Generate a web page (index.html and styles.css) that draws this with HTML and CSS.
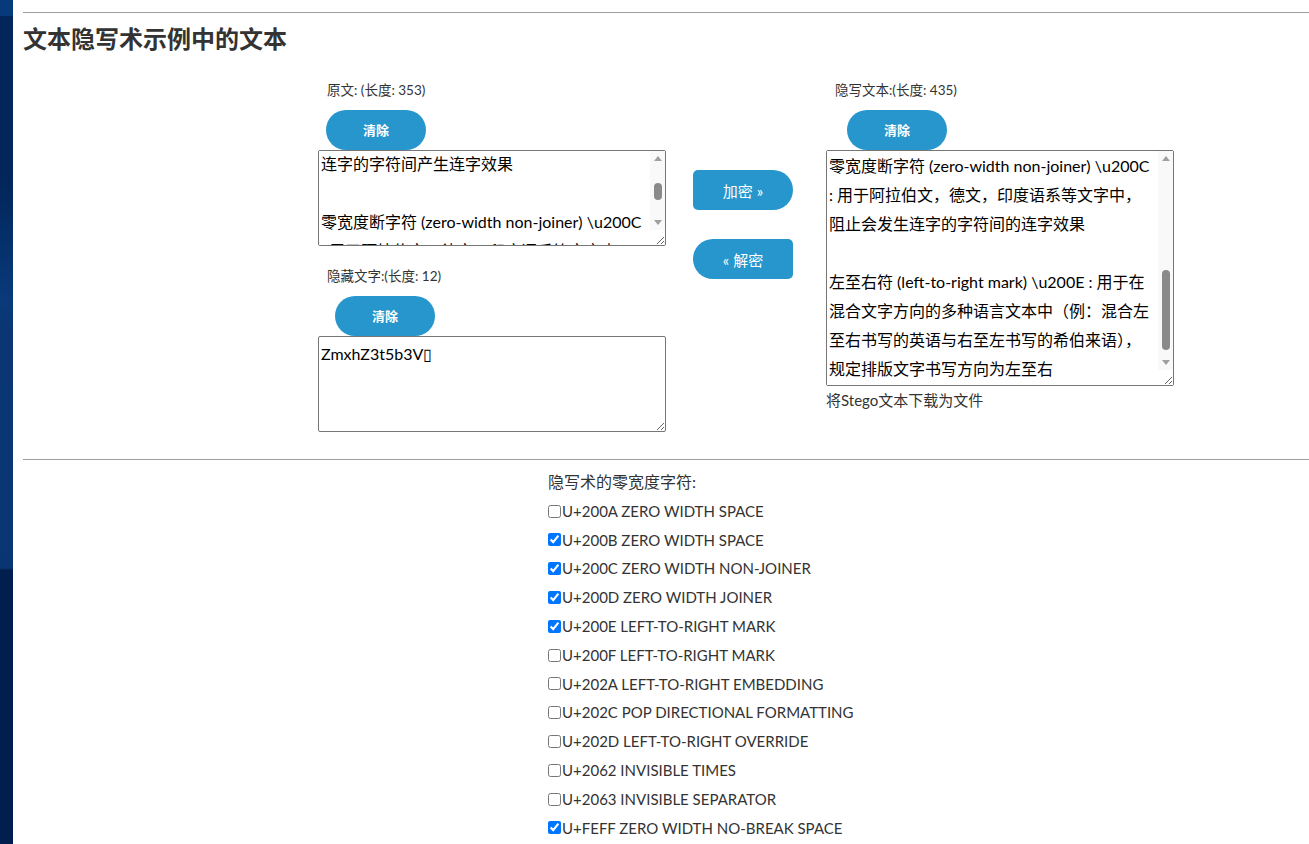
FILE: index.html
```html
<!DOCTYPE html>
<html lang="zh-CN">
<head>
<meta charset="utf-8">
<title>文本隐写术示例中的文本</title>
<link rel="stylesheet" href="styles.css">
</head>
<body>
<div class="page">
  <aside class="strip"></aside>
  <main class="main">
    <hr class="rule rule-top">
    <h2 class="title">文本隐写术示例中的文本</h2>
    <section class="stego">
      <div class="col col-left">
        <div class="label">原文: (长度: 353)</div>
        <button class="btn-clear ind-8">清除</button>
        <div class="ta-wrap">
          <textarea class="ta ta-small ta-scroll" id="plain" spellcheck="false">零宽度字符是一些不可见的，不可打印的字符。它们存在于页面中主要用于调整字符的显示格式，下面就是一些常见的零宽度字符及它们的unicode码和原本用途：

零宽度空格符 (zero-width space) \u200B : 用于较长单词的换行分隔

零宽度非断空格符 (zero width no-break space) \uFEFF : 用于阻止特定位置的换行分隔

零宽度连字符 (zero-width joiner) \u200D : 用于阿拉伯文与印度语系等文字中，使不会发生连字的字符间产生连字效果

零宽度断字符 (zero-width non-joiner) \u200C : 用于阿拉伯文，德文，印度语系等文字中，阻止会发生连字的字符间的连字效果

左至右符 (left-to-right mark) \u200E : 用于在混合文字方向的多种语言文本中（例：混合左至右书写的英语与右至左书写的希伯来语），规定排版文字书写方向为左至右

右至左符 (right-to-left mark) \u200F : 用于在混合文字方向的多种语言文本中，规定排版文字书写方向为右至左</textarea>
          <div class="vbar"><span class="arr arr-up"></span><span class="track"><span class="thumb" style="top: 17px; height: 17px;"></span></span><span class="arr arr-down"></span></div>
        </div>
        <div class="label label-gap">隐藏文字:(长度: 12)</div>
        <button class="btn-clear ind-17">清除</button>
        <textarea class="ta ta-small" spellcheck="false">ZmxhZ3t5b3V▯</textarea>
      </div>
      <div class="col col-mid">
        <button class="btn-act btn-enc">加密 »</button>
        <button class="btn-act btn-dec">« 解密</button>
      </div>
      <div class="col col-right">
        <div class="label">隐写文本:(长度: 435)</div>
        <button class="btn-clear ind-21">清除</button>
        <div class="ta-wrap">
          <textarea class="ta ta-big ta-scroll" id="stego" spellcheck="false">零宽度字符是一些不可见的，不可打印的字符。它们存在于页面中主要用于调整字符的显示格式，下面就是一些常见的零宽度字符及它们的unicode码和原本用途：

零宽度空格符 (zero-width space) \u200B : 用于较长单词的换行分隔

零宽度非断空格符 (zero width no-break space) \uFEFF : 用于阻止特定位置的换行分隔

零宽度连字符 (zero-width joiner) \u200D : 用于阿拉伯文与印度语系等文字中，使不会发生连字的字符间产生连字效果

零宽度断字符 (zero-width non-joiner) \u200C : 用于阿拉伯文，德文，印度语系等文字中，阻止会发生连字的字符间的连字效果

左至右符 (left-to-right mark) \u200E : 用于在混合文字方向的多种语言文本中（例：混合左至右书写的英语与右至左书写的希伯来语），规定排版文字书写方向为左至右

右至左符 (right-to-left mark) \u200F : 用于在混合文字方向的多种语言文本中，规定排版文字书写方向为右至左</textarea>
          <div class="vbar"><span class="arr arr-up"></span><span class="track"><span class="thumb" style="top: 104px; height: 80px;"></span></span><span class="arr arr-down"></span></div>
        </div>
        <div class="download">将Stego文本下载为文件</div>
      </div>
    </section>
    <hr class="rule rule-mid">
    <section class="chars">
      <div class="chars-title">隐写术的零宽度字符:</div>
      <label class="chk"><input type="checkbox">U+200A ZERO WIDTH SPACE</label>
      <label class="chk"><input type="checkbox" checked>U+200B ZERO WIDTH SPACE</label>
      <label class="chk"><input type="checkbox" checked>U+200C ZERO WIDTH NON-JOINER</label>
      <label class="chk"><input type="checkbox" checked>U+200D ZERO WIDTH JOINER</label>
      <label class="chk"><input type="checkbox" checked>U+200E LEFT-TO-RIGHT MARK</label>
      <label class="chk"><input type="checkbox">U+200F LEFT-TO-RIGHT MARK</label>
      <label class="chk"><input type="checkbox">U+202A LEFT-TO-RIGHT EMBEDDING</label>
      <label class="chk"><input type="checkbox">U+202C POP DIRECTIONAL FORMATTING</label>
      <label class="chk"><input type="checkbox">U+202D LEFT-TO-RIGHT OVERRIDE</label>
      <label class="chk"><input type="checkbox">U+2062 INVISIBLE TIMES</label>
      <label class="chk"><input type="checkbox">U+2063 INVISIBLE SEPARATOR</label>
      <label class="chk"><input type="checkbox" checked>U+FEFF ZERO WIDTH NO-BREAK SPACE</label>
    </section>
  </main>
</div>
<script src="script.js"></script>
</body>
</html>
```
FILE: styles.css
```css
html, body {
  margin: 0;
  padding: 0;
  background: #fff;
}
body {
  font-family: "Lato", "Noto Sans CJK SC", sans-serif;
  color: #333;
  overflow: hidden;
}
.page {
  display: flex;
  min-height: 844px;
}
.strip {
  width: 13px;
  flex: none;
  background: linear-gradient(to bottom,
    #073a7b 0px, #073a7b 16px,
    #022659 16px, #022659 180px,
    #04306a 240px, #0a3a7a 300px,
    #0b3673 330px, #0a3573 568px,
    #001f4e 570px, #001f4e 844px);
}
.main {
  flex: 1;
  padding-left: 10px;
  min-width: 0;
}
.rule {
  border: 0;
  border-top: 1px solid #9d9d9d;
  height: 0;
  margin: 0;
}
.rule-top { margin-top: 12px; }
.rule-mid { margin-top: 27px; }
.title {
  margin: 10px 0 0;
  font-size: 24px;
  line-height: 32px;
  font-weight: bold;
  color: #333;
}
.stego {
  display: flex;
  align-items: flex-start;
  margin: 20px 0 0 295px;
}
.col { display: flex; flex-direction: column; align-items: flex-start; }
.col-left, .col-right { width: 348px; }
.col-mid { width: 100px; margin: 0 33px 0 27px; padding-top: 95px; gap: 29px; }
.label {
  font-size: 13.5px;
  line-height: 20px;
  padding: 5px 0 0 9px;
  color: #333;
}
.label-gap { padding-top: 20px; }
.btn-clear {
  margin-top: 10px;
  width: 100px;
  height: 40px;
  border: 0;
  border-radius: 20px;
  background: #2696cd;
  color: #fff;
  font-family: inherit;
  font-size: 13px;
  font-weight: bold;
  padding: 0 0 2px;
}
.ind-8 { margin-left: 8px; }
.ind-17 { margin-left: 17px; }
.ind-21 { margin-left: 21px; }
.ta-wrap {
  position: relative;
  width: 348px;
}
.ta {
  display: block;
  box-sizing: border-box;
  width: 348px;
  margin: 0;
  padding: 2px;
  border: 1px solid #767676;
  border-radius: 2px;
  font-family: "Lato", "Noto Sans CJK SC", sans-serif;
  font-size: 16px;
  line-height: 29px;
  color: #000;
  background: #fff;
  resize: both;
  overflow-y: auto;
  scrollbar-width: none;
}
.ta::-webkit-scrollbar { display: none; }
.ta-scroll { padding-right: 17px; }
.ta-small { height: 96px; }
.ta-big { height: 236px; }
.vbar {
  position: absolute;
  top: 1px;
  right: 1px;
  bottom: 16px;
  width: 15px;
  display: flex;
  flex-direction: column;
  background: #f9f9f9;
}
.arr {
  flex: none;
  height: 15px;
  display: flex;
  align-items: center;
  justify-content: center;
}
.arr::before {
  content: "";
  width: 0;
  height: 0;
  border-left: 4.5px solid transparent;
  border-right: 4.5px solid transparent;
}
.arr-up::before { border-bottom: 5px solid #9f9f9f; }
.arr-down::before { border-top: 5px solid #9f9f9f; }
.track {
  flex: 1;
  position: relative;
}
.thumb {
  position: absolute;
  left: 4px;
  width: 8px;
  border-radius: 4px;
  background: #8a8a8a;
}
.download {
  font-size: 15px;
  line-height: 28px;
  color: #333;
}
.btn-act {
  width: 100px;
  height: 40px;
  border: 0;
  background: #2696cd;
  color: #fff;
  font-family: inherit;
  font-size: 15px;
  padding: 0;
}
.btn-enc { border-radius: 5px 20px 20px 5px; }
.btn-dec { border-radius: 20px 5px 5px 20px; }
.chars {
  margin: 8px 0 0 525px;
  font-size: 16px;
  line-height: 28.8px;
  color: #333;
}
.chars-title { display: block; }
.chk {
  display: flex;
  align-items: center;
  height: 28.8px;
  font-size: 15px;
  white-space: nowrap;
}
.chk input {
  width: 13px;
  height: 13px;
  margin: 0 1px 0 0;
  flex: none;
}
```
FILE: script.js
```js
(function () {
  function markerTop(ta, marker) {
    var cs = getComputedStyle(ta);
    var mirror = document.createElement('div');
    var padL = parseFloat(cs.paddingLeft), padR = parseFloat(cs.paddingRight);
    mirror.style.position = 'absolute';
    mirror.style.visibility = 'hidden';
    mirror.style.left = '0';
    mirror.style.top = '0';
    mirror.style.whiteSpace = 'pre-wrap';
    mirror.style.overflowWrap = 'break-word';
    mirror.style.width = (ta.clientWidth - padL - padR) + 'px';
    mirror.style.font = cs.font;
    mirror.style.lineHeight = cs.lineHeight;
    var idx = ta.value.indexOf(marker);
    mirror.appendChild(document.createTextNode(ta.value.slice(0, idx)));
    var span = document.createElement('span');
    span.textContent = marker;
    mirror.appendChild(span);
    document.body.appendChild(mirror);
    var top = span.offsetTop;
    document.body.removeChild(mirror);
    return top;
  }
  function setup(id, marker, delta) {
    var ta = document.getElementById(id);
    var lh = parseFloat(getComputedStyle(ta).lineHeight);
    var top = markerTop(ta, marker);
    ta.scrollTop = Math.floor(top / lh) * lh + delta;
  }
  setup('plain', '连字的字符间产生连字效果', 4);
  setup('stego', '零宽度断字符', 2);
})();
```
